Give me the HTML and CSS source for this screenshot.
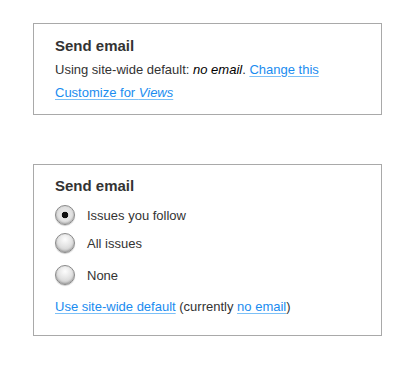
FILE: index.html
```html
<!DOCTYPE html>
<html lang="en">

<head>
	<meta charset="utf-8">
	<title>Send email</title>
	<link rel="stylesheet" href="styles.css">
</head>

<body>
	<div class="page">
		<section class="panel">
			<h3 class="panel-title">Send email</h3>
			<p class="line">Using site-wide default: <em class="value">no email</em>. <a href="#">Change this</a></p>
			<p class="line"><a href="#">Customize for <em>Views</em></a></p>
		</section>

		<section class="panel panel-form">
			<h3 class="panel-title">Send email</h3>
			<label class="option">
				<input type="radio" name="email" checked>
				<span>Issues you follow</span>
			</label>
			<label class="option">
				<input type="radio" name="email">
				<span>All issues</span>
			</label>
			<label class="option option-last">
				<input type="radio" name="email">
				<span>None</span>
			</label>
			<p class="line footer"><a href="#">Use site-wide default</a> (currently <a href="#">no email</a>)</p>
		</section>
	</div>
</body>

</html>
```

FILE: styles.css
```css
* {
	margin: 0;
	padding: 0;
	box-sizing: border-box;
}

body {
	background: #fff;
	font-family: "Liberation Sans", Arial, sans-serif;
	font-size: 13px;
	color: #333;
}

.page {
	padding: 23px 0 0 33px;
	display: flex;
	flex-direction: column;
	gap: 49px;
}

.panel {
	width: 349px;
	border: 1px solid #a9a9a9;
	padding: 13px 21px 10px;
}

.panel-title {
	font-size: 15px;
	line-height: 18px;
	font-weight: bold;
	color: #333;
	margin-bottom: 3px;
}

.line {
	line-height: 23px;
}

.value {
	color: #000;
}

a {
	color: #1a8cf0;
	text-decoration: underline;
	text-decoration-color: #7cc0f7;
	text-underline-offset: 2px;
}

.panel-form {
	padding-top: 12px;
	padding-bottom: 17px;
}

.panel-form .panel-title {
	margin-bottom: 10px;
}

.option {
	display: flex;
	align-items: center;
	gap: 12px;
	height: 20px;
	margin-bottom: 8px;
}

.option-last {
	margin-top: 12px;
}

.option input {
	appearance: none;
	-webkit-appearance: none;
	width: 20px;
	height: 20px;
	border-radius: 50%;
	border: 1px solid #8a8a8a;
	background: radial-gradient(circle at 50% 30%, #fdfdfd 0%, #e4e4e4 45%, #c2c2c2 100%);
	box-shadow: inset 0 -1px 2px rgba(0, 0, 0, .25), 0 1px 1px rgba(0, 0, 0, .2);
}

.option input:checked {
	background: radial-gradient(circle at 50% 50%, #111 0, #111 3px, #e8e8e8 3.6px, #d4d4d4 100%);
}

.footer {
	margin-top: 10px;
}
```
